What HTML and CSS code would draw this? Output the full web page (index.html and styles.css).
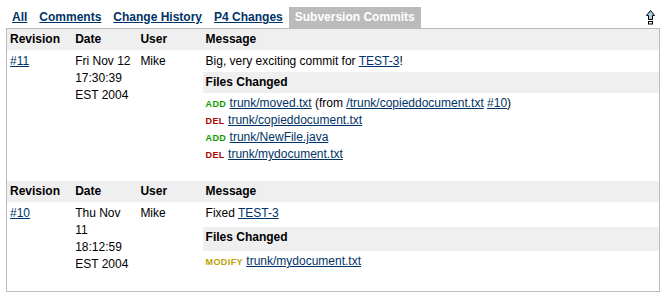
FILE: index.html
```html
<!DOCTYPE html>
<html lang="en">
<head>
    <meta charset="UTF-8">
    <title>Subversion Commits</title>
    <link rel="stylesheet" href="styles.css">
</head>
<body>
    <div class="page">
        <div class="tabs">
            <a class="tab" href="#">All</a>
            <a class="tab" href="#">Comments</a>
            <a class="tab" href="#">Change History</a>
            <a class="tab" href="#">P4 Changes</a>
            <span class="tab current">Subversion Commits</span>
            <!-- collapse / back to top -->
            <svg class="top-icon" width="9" height="15" viewBox="0 0 9 15">
                <path d="M4.5 0.5 L8.5 5.5 L6.5 5.5 L6.5 9.5 L2.5 9.5 L2.5 5.5 L0.5 5.5 Z" fill="#a8cde8" stroke="#000"/>
                <rect x="2.5" y="11.5" width="4" height="2.5" fill="#fff" stroke="#000"/>
            </svg>
        </div>

        <div class="panel">
            <table class="commit">
                <tr>
                    <th class="col">Revision</th>
                    <th class="col">Date</th>
                    <th class="col">User</th>
                    <th>Message</th>
                </tr>
                <tr>
                    <td rowspan="3"><a href="#">#11</a></td>
                    <td rowspan="3">Fri Nov 12 17:30:39 EST 2004</td>
                    <td rowspan="3">Mike</td>
                    <td class="msg">Big, very exciting commit for <a href="#">TEST-3</a>!</td>
                </tr>
                <tr>
                    <td class="files-head">Files Changed</td>
                </tr>
                <tr>
                    <td class="files">
                        <div><span class="action add">ADD</span> <a href="#">trunk/moved.txt</a> (from <a href="#">/trunk/copieddocument.txt</a> <a href="#">#10</a>)</div>
                        <div><span class="action del">DEL</span> <a href="#">trunk/copieddocument.txt</a></div>
                        <div><span class="action add">ADD</span> <a href="#">trunk/NewFile.java</a></div>
                        <div><span class="action del">DEL</span> <a href="#">trunk/mydocument.txt</a></div>
                    </td>
                </tr>
            </table>

            <table class="commit">
                <tr>
                    <th class="col">Revision</th>
                    <th class="col">Date</th>
                    <th class="col">User</th>
                    <th>Message</th>
                </tr>
                <tr>
                    <td rowspan="3"><a href="#">#10</a></td>
                    <td rowspan="3">Thu Nov 11 18:12:59 EST 2004</td>
                    <td rowspan="3">Mike</td>
                    <td class="msg">Fixed <a href="#">TEST-3</a></td>
                </tr>
                <tr>
                    <td class="files-head">Files Changed</td>
                </tr>
                <tr>
                    <td class="files">
                        <div><span class="action modify">MODIFY</span> <a href="#">trunk/mydocument.txt</a></div>
                    </td>
                </tr>
            </table>
        </div>
    </div>
</body>
</html>
```

FILE: styles.css
```css
body { margin: 0; font-family: "Liberation Sans", Arial, sans-serif; font-size: 12px; line-height: 17px; color: #000; }
a { color: #003366; text-decoration: underline; }
.page { padding: 7px 6px 0; }

.tabs { display: flex; align-items: flex-end; }
.tab { padding: 2px 6px; font-weight: bold; }
.tab.current { background: #bbbbbb; color: #fff; }
.top-icon { margin-left: auto; margin-right: 5px; margin-bottom: 3px; }

.panel { border: 1px solid #bbbbbb; }
.commit { width: 100%; table-layout: fixed; border-collapse: collapse; margin-bottom: 15px; }
.commit th { text-align: left; background: #efefef; padding: 2px 3px; }
.commit th.col { width: 10%; box-sizing: border-box; }
.commit td { vertical-align: top; padding: 3px 3px; }
.commit td.msg { padding: 3px 3px 2px; }
.commit td.files-head { font-weight: bold; background: #efefef; padding: 2px 3px; }
.commit td.files { padding: 2px 3px 3px; }

.action { font-size: 9px; line-height: 10px; font-weight: bold; letter-spacing: 0.4px; }
.action.add { color: #119900; }
.action.del { color: #aa0000; }
.action.modify { color: #bba300; }
```
